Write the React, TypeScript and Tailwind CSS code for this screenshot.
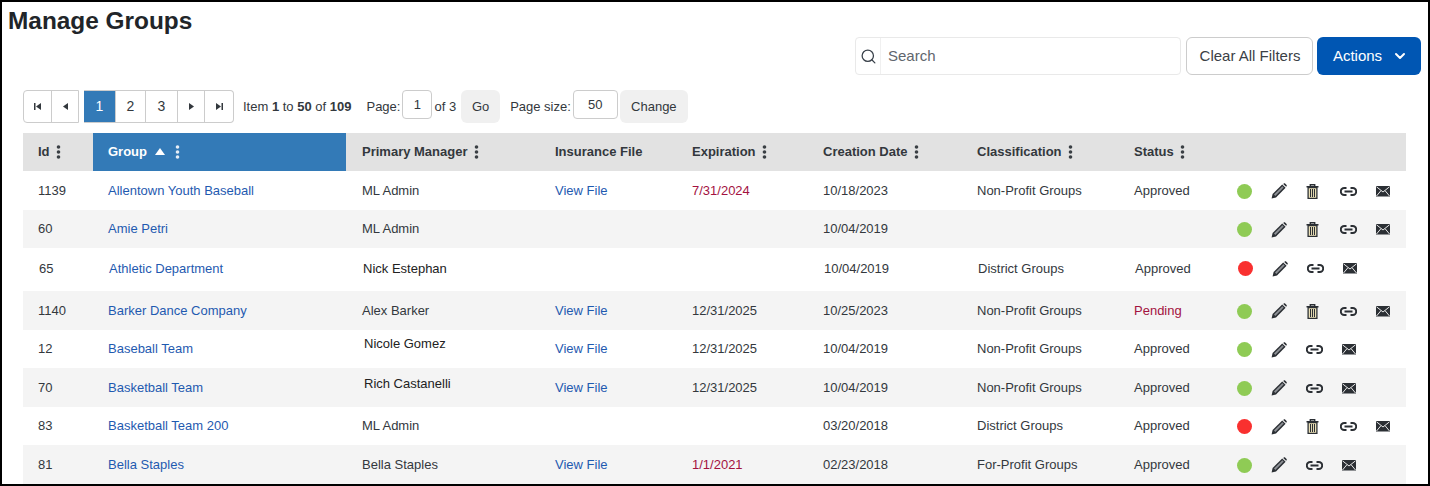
import { Search, ChevronDown } from "lucide-react";

const font = "font-['Liberation_Sans',Arial,sans-serif]";

const Dots = ({ light }: { light?: boolean }) => (
  <svg width="5" height="14" viewBox="0 0 5 14" className="inline-block ml-[6px] align-[-3px]">
    <g fill={light ? "#e6eef6" : "#3a3f44"}>
      <circle cx="2.5" cy="2" r="1.8" />
      <circle cx="2.5" cy="7" r="1.8" />
      <circle cx="2.5" cy="12" r="1.8" />
    </g>
  </svg>
);

const Pencil = () => (
  <svg width="16" height="16" viewBox="0 0 16 16">
    <path d="M.6 15.400l1-4.400L11.200 1.400l3.400 3.400L5 14.400z" fill="#2b2f34" />
    <path d="M3 11.600l8.400-8.400 1.300 1.300-8.400 8.400z" fill="#8d9095" />
    <path d="M12.200.9l.6-.5c.4-.3 1-.3 1.300 0l1.500 1.500c.3.3.3.900 0 1.300l-.5.6z" fill="#2b2f34" />
  </svg>
);

const Trash = () => (
  <svg width="13" height="15" viewBox="0 0 13 15">
    <path d="M0.500 2.700h12M4.300 2.700V.8h4.400v1.900" stroke="#2b2f34" strokeWidth="1.400" fill="none" />
    <path d="M2.100 3.500h8.800v10.800H2.100z" fill="#f3e8bd" stroke="#2b2f34" strokeWidth="1.300" />
    <path d="M4.500 5v8M6.500 5v8M8.500 5v8" stroke="#2b2f34" strokeWidth="1.100" />
  </svg>
);

const LinkIcon = () => (
  <svg width="17" height="9" viewBox="0 0 17 9">
    <path
      d="M6.500 1H4.300a3.500 3.500 0 0 0 0 7h2.200M10.500 1h2.200a3.500 3.500 0 0 1 0 7h-2.200M4.500 4.500h8"
      stroke="#2b2f34"
      strokeWidth="2"
      fill="none"
    />
  </svg>
);

const Mail = () => (
  <svg width="14" height="11" viewBox="0 0 14 11">
    <rect width="14" height="10.500" fill="#2b2f34" />
    <path d="M0.500 .8L7 6 13.500 .8M0.500 10L5 4.600M13.500 10L9 4.600" stroke="#e8e8e8" strokeWidth="1" fill="none" />
  </svg>
);

const PagerGlyph = ({ d }: { d: string }) => (
  <svg width="9" height="9" viewBox="0 0 9 9">
    <path d={d} fill="#33383d" />
  </svg>
);

const PagerBtn = ({ children, active, w }: { children: React.ReactNode; active?: boolean; w: string }) => (
  <span
    className={`flex items-center justify-center h-full border-r border-[#cccccc] last:border-r-0 ${w} ${
      active ? "bg-[#337ab7] text-white" : "text-[#33383d]"
    }`}
  >
    {children}
  </span>
);

type Row = {
  id: string;
  group: string;
  manager: string;
  file?: boolean;
  expiration?: string;
  expired?: boolean;
  created: string;
  classification?: string;
  status?: string;
  red?: boolean;
  trash: boolean;
  h: string;
  shift?: boolean;
  raised?: string;
};

const rows: Row[] = [
  { id: "1139", group: "Allentown Youth Baseball", manager: "ML Admin", file: true, expiration: "7/31/2024", expired: true, created: "10/18/2023", classification: "Non-Profit Groups", status: "Approved", trash: true, h: "h-[39px]" },
  { id: "60", group: "Amie Petri", manager: "ML Admin", created: "10/04/2019", trash: true, h: "h-[38px]" },
  { id: "65", group: "Athletic Department", manager: "Nick Estephan", created: "10/04/2019", classification: "District Groups", status: "Approved", red: true, trash: false, h: "h-[43px]", shift: true },
  { id: "1140", group: "Barker Dance Company", manager: "Alex Barker", file: true, expiration: "12/31/2025", created: "10/25/2023", classification: "Non-Profit Groups", status: "Pending", trash: true, h: "h-[39px]" },
  { id: "12", group: "Baseball Team", manager: "Nicole Gomez", file: true, expiration: "12/31/2025", created: "10/04/2019", classification: "Non-Profit Groups", status: "Approved", trash: false, h: "h-[38px]", raised: "pb-[11px]" },
  { id: "70", group: "Basketball Team", manager: "Rich Castanelli", file: true, expiration: "12/31/2025", created: "10/04/2019", classification: "Non-Profit Groups", status: "Approved", trash: false, h: "h-[39px]", raised: "pb-[8px]" },
  { id: "83", group: "Basketball Team 200", manager: "ML Admin", created: "03/20/2018", classification: "District Groups", status: "Approved", red: true, trash: true, h: "h-[38px]" },
  { id: "81", group: "Bella Staples", manager: "Bella Staples", file: true, expiration: "1/1/2021", expired: true, created: "02/23/2018", classification: "For-Profit Groups", status: "Approved", trash: false, h: "h-[39px]" },
];

export default function App() {
  return (
    <div className={`${font} w-[1430px] h-[486px] overflow-hidden bg-white border-2 border-black text-[#33383d] text-[13px]`}>
      <h1 className="text-[24.4px] leading-[28px] font-bold text-[#212529] pl-[6px] pt-[5px]">Manage Groups</h1>

      <div className="flex justify-end pr-[7px] mt-[2px] h-[38px] text-[15px]">
        <div className="flex w-[326px] border border-[#e9e9e9] rounded-[4px] items-center">
          <span className="w-[25px] flex justify-center border-r border-[#f0f0f0] h-full items-center">
            <Search size={17} strokeWidth={1.8} color="#39414a" />
          </span>
          <span className="pl-[7px] text-[#5f666d]">Search</span>
        </div>
        <button className="ml-[5px] w-[127px] pl-[1px] border border-[#cccccc] rounded-[6px] text-[#3b4046]">Clear All Filters</button>
        <button className="ml-[4px] w-[104px] pl-[3px] bg-[#0056b3] rounded-[6px] text-white flex items-center justify-center gap-[10px]">
          Actions <ChevronDown size={16} strokeWidth={3} />
        </button>
      </div>

      <div className="flex items-center ml-[21px] mt-[15px] h-[33px]">
        <div className="flex items-center h-full border border-[#cccccc] rounded-l-[4px]">
          <PagerBtn w="w-[28px]"><PagerGlyph d="M1 1h1.500v7H1zM8 1v7L3 4.500z" /></PagerBtn>
          <PagerBtn w="w-[26px]"><PagerGlyph d="M7 1v7L2 4.500z" /></PagerBtn>
        </div>
        <div className="flex items-center h-full border-y border-r border-[#cccccc] rounded-r-[4px] ml-[5px] text-[14px]">
          <PagerBtn active w="w-[32px]">1</PagerBtn>
          <PagerBtn w="w-[30px]">2</PagerBtn>
          <PagerBtn w="w-[32px]">3</PagerBtn>
          <PagerBtn w="w-[27px]"><PagerGlyph d="M2 1v7l5-3.500z" /></PagerBtn>
          <PagerBtn w="w-[28px]"><PagerGlyph d="M1 1v7l5-3.500zM6.500 1H8v7H6.500z" /></PagerBtn>
        </div>
        <span className="ml-[9px]">Item <b>1</b> to <b>50</b> of <b>109</b></span>
        <span className="ml-[15px]">Page:</span>
        <span className="ml-[2px] w-[30px] h-[29px] self-start border border-[#cccccc] rounded-[4px] flex items-center justify-center">1</span>
        <span className="ml-[2px]">of 3</span>
        <span className="ml-[5px] w-[39px] h-[33px] bg-[#f0f0f0] rounded-[6px] flex items-center justify-center">Go</span>
        <span className="ml-[10px]">Page size:</span>
        <span className="ml-[2px] w-[45px] h-[29px] self-start border border-[#cccccc] rounded-[4px] flex items-center justify-center">50</span>
        <span className="ml-[2px] w-[68px] h-[33px] bg-[#f0f0f0] rounded-[6px] flex items-center justify-center">Change</span>
      </div>

      <table className="ml-[21px] mt-[10px] w-[1383px] table-fixed border-collapse">
        <colgroup>
          <col className="w-[70px]" />
          <col className="w-[253px]" />
          <col className="w-[194px]" />
          <col className="w-[137px]" />
          <col className="w-[131px]" />
          <col className="w-[154px]" />
          <col className="w-[157px]" />
          <col className="w-[100px]" />
          <col />
        </colgroup>
        <thead>
          <tr className="h-[38px] bg-[#e2e2e2] font-bold text-left">
            <th className="pl-[15px] pb-[1px]">Id<Dots /></th>
            <th className="pl-[15px] pb-[1px] bg-[#337ab7] text-white">
              Group
              <svg width="10" height="7" viewBox="0 0 10 7" className="inline-block ml-[8px] align-[1px]">
                <path d="M5 0l5 7H0z" fill="#fff" />
              </svg>
              <span className="ml-[4px]"><Dots light /></span>
            </th>
            <th className="pl-[16px] pb-[1px]">Primary Manager<Dots /></th>
            <th className="pl-[15px] pb-[1px]">Insurance File</th>
            <th className="pl-[15px] pb-[1px]">Expiration<Dots /></th>
            <th className="pl-[15px] pb-[1px]">Creation Date<Dots /></th>
            <th className="pl-[15px] pb-[1px]">Classification<Dots /></th>
            <th className="pl-[15px] pb-[1px]">Status<Dots /></th>
            <th />
          </tr>
        </thead>
        <tbody>
          {rows.map((r, i) => {
            const pad = r.shift ? "pl-[16px] pb-[2px]" : "pl-[15px]";
            return (
              <tr key={r.id} className={`${r.h} ${i % 2 === 1 ? "bg-[#f4f4f4]" : "bg-white"}`}>
                <td className={pad}>{r.id}</td>
                <td className={`${pad} text-[#1f5ab0]`}>{r.group}</td>
                <td className={r.raised ? `pl-[18px] ${r.raised} text-[#222222]` : r.shift ? "pl-[17px] pb-[2px] text-[#222222]" : "pl-[16px]"}>{r.manager}</td>
                <td className="pl-[15px] text-[#1f5ab0]">{r.file ? "View File" : ""}</td>
                <td className={`pl-[15px] ${r.expired ? "text-[#a3123f]" : ""}`}>{r.expiration}</td>
                <td className={pad}>{r.created}</td>
                <td className={pad}>{r.classification}</td>
                <td className={`${pad} ${r.status === "Pending" ? "text-[#a3123f]" : ""}`}>{r.status}</td>
                <td className={r.shift ? "pl-[19px] pb-[2px]" : "pl-[18px] pt-[1px]"}>
                  <div className="flex items-center">
                    <span className="flex w-[34px] justify-start">
                      <span className={`w-[15px] h-[15px] rounded-full ${r.red ? "bg-[#f9302f]" : "bg-[#8fcb55]"}`} />
                    </span>
                    <span className="flex w-[35px]"><Pencil /></span>
                    {r.trash && <span className="flex w-[34px]"><Trash /></span>}
                    <span className="flex w-[36px]"><LinkIcon /></span>
                    <Mail />
                  </div>
                </td>
              </tr>
            );
          })}
        </tbody>
      </table>
    </div>
  );
}
